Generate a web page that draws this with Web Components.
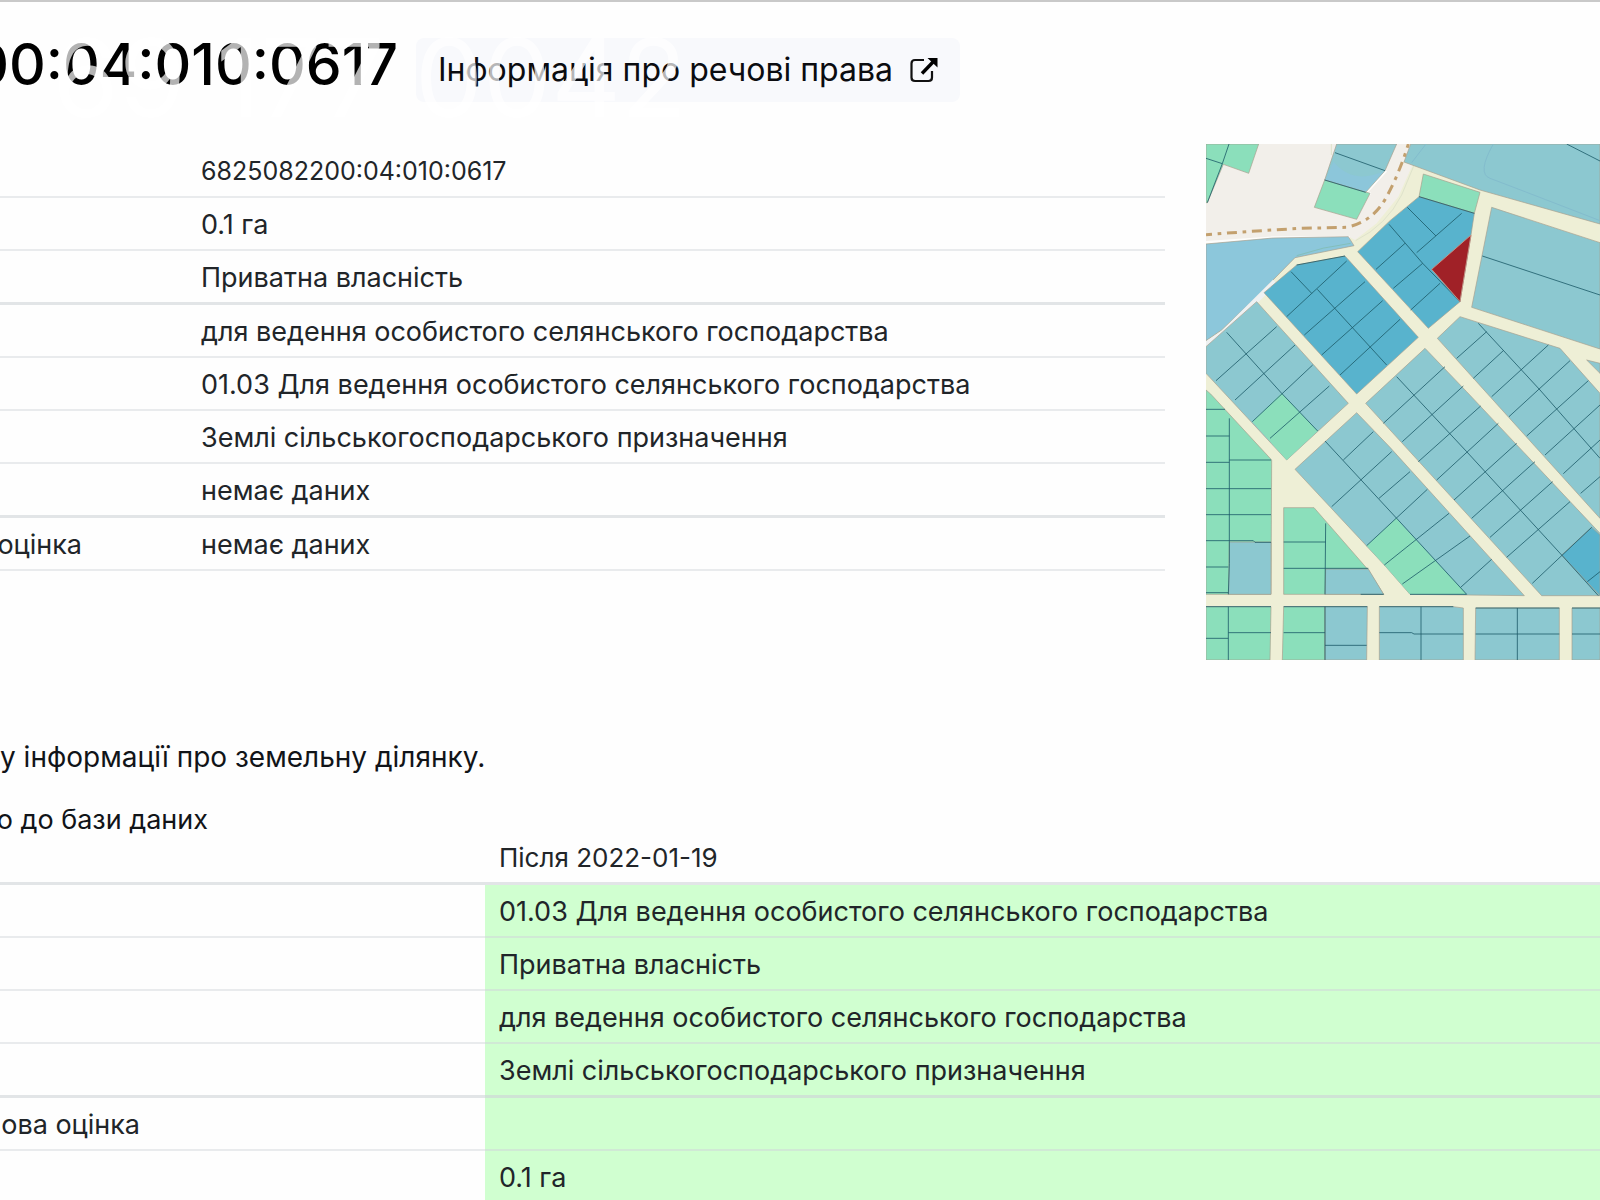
<!DOCTYPE html>
<html lang="uk">
<head>
<meta charset="utf-8">
<title>Земельна ділянка</title>
<style>
  body { margin: 0; background: #fefefe; overflow: hidden; font-family: Inter, "Noto Sans", sans-serif; color: #212529; }
</style>
</head>
<body>
<parcel-page></parcel-page>
<script>
function define(name, html, setup) {
  const t = document.createElement('template');
  t.innerHTML = html;
  customElements.define(name, class extends HTMLElement {
    connectedCallback() {
      if (this.shadowRoot) return;
      this.attachShadow({ mode: 'open' }).append(t.content.cloneNode(true));
      if (setup) setup(this);
    }
  });
}

define('clip-end', `
<style>
  :host { display: flex; justify-content: flex-end; overflow: hidden; white-space: nowrap; }
</style>
<span><slot></slot></span>`);

define('rights-link', `
<style>
  :host { display: block; }
  a { display: flex; align-items: center; gap: 17px; box-sizing: border-box; height: 64px; padding: 0 22px;
      background: #f8f9fc; border-radius: 8px; color: #0b0c10; text-decoration: none; font-size: 32px; line-height: 40px; white-space: nowrap; }
  svg { display: block; width: 28px; height: 26px; }
</style>
<a href="#rights"><slot></slot>
<svg viewBox="0 0 28 26" aria-hidden="true">
  <path d="M14 3H5Q1.5 3 1.5 6.500V20.500Q1.500 24 5 24H18.500Q22 24 22 20.500V14" fill="none" stroke="#111" stroke-width="2.200"/>
  <path d="M12 16.500 23 5" fill="none" stroke="#000" stroke-width="3.400"/>
  <path d="M17.500 1H27.500V10.500Z" fill="#000"/>
</svg></a>`);

define('page-header', `
<style>
  :host { display: flex; align-items: flex-start; gap: 18px; padding-top: 36px; height: 106px; box-sizing: border-box; border-top: 2px solid #c9c9c9; position: relative; }
  h1 { margin: 0; width: 398px; font-size: 57px; line-height: 54px; font-weight: 500; color: #000; }
  .stamp { position: absolute; left: 52px; top: 16px; font-size: 108px; line-height: 120px; color: rgba(255,255,255,.7); white-space: nowrap; pointer-events: none; }
</style>
<h1><clip-end>00:04:010:0617</clip-end></h1>
<rights-link>Інформація про речові права</rights-link>
<div class="stamp" aria-hidden="true">69 177 0042</div>`);

define('parcel-facts', `
<style>
  :host { display: block; padding-top: 1px; }
  table { width: 100%; border-collapse: separate; border-spacing: 0; table-layout: fixed; font-size: 27px; line-height: 31px; }
  th, td { padding: 11px 0 9px; height: 31px; font-weight: 400; text-align: left; border-bottom: 2px solid #e9ebed; white-space: nowrap; }
  th { width: 201px; }
  clip-end { width: 82px; }
  .strong > * { border-bottom: 3px solid #e2e5e7; }
  .num { font-size: 25px; }
</style>
<table><tbody>
<tr><th></th><td class="num">6825082200:04:010:0617</td></tr>
<tr><th></th><td>0.1 га</td></tr>
<tr class="strong"><th></th><td>Приватна власність</td></tr>
<tr><th></th><td>для ведення особистого селянського господарства</td></tr>
<tr><th></th><td>01.03 Для ведення особистого селянського господарства</td></tr>
<tr><th></th><td>Землі сільськогосподарського призначення</td></tr>
<tr class="strong"><th></th><td>немає даних</td></tr>
<tr><th scope="row"><clip-end>оцінка</clip-end></th><td>немає даних</td></tr>
</tbody></table>`);

define('change-table', `
<style>
  :host { display: block; }
  table { width: 100%; border-collapse: separate; border-spacing: 0; table-layout: fixed; font-size: 27px; line-height: 31px; }
  th, td { padding: 11px 0 9px; height: 31px; font-weight: 400; text-align: left; border-bottom: 2px solid #e9ebed; white-space: nowrap; }
  th:first-child { width: 485px; }
  thead th + th, td { padding-left: 14px; }
  td { background: #d0ffd0; border-color: #d0e9d5; }
  .strong > * { border-bottom-width: 3px; border-bottom-color: #e2e5e7; }
  .strong > td { border-bottom-color: #cfe3d5; }
  clip-end { width: 140px; }
  .num { font-size: 26px; }
</style>
<table>
<thead><tr class="strong"><th></th><th class="num" scope="col">Після 2022-01-19</th></tr></thead>
<tbody>
<tr><th></th><td>01.03 Для ведення особистого селянського господарства</td></tr>
<tr><th></th><td>Приватна власність</td></tr>
<tr><th></th><td>для ведення особистого селянського господарства</td></tr>
<tr class="strong"><th></th><td>Землі сільськогосподарського призначення</td></tr>
<tr><th scope="row"><clip-end>ова оцінка</clip-end></th><td></td></tr>
<tr><th></th><td>0.1 га</td></tr>
</tbody></table>`);

define('parcel-map', `
<style>
  :host { display: block; overflow: hidden; }
  svg { display: block; width: 100%; aspect-ratio: 394 / 516; }
  .t, .d, .g, .b { stroke: #a79f8d; stroke-width: 2; }
  .t { fill: #8cc8d0; } .d { fill: #58b3cd; } .g { fill: #8bdfbb; } .b { fill: #8cc7db; }
  .l { fill: none; stroke: #1b5a68; stroke-width: 3; opacity: .8; }
</style>
<svg viewBox="48 42 1182 1548" role="img" aria-label="Кадастрова карта">
<path fill="#eeefd6" d="M48 42H1230V1590H48Z"/>
<path fill="#f2efea" d="M48 42H665L640 98 668 104 625 200 560 280 495 330 480 322H250L48 340Z"/>
<path fill="none" stroke="#dfe3cb" stroke-width="3" d="M497 332Q590 285 635 195L672 106M424 42V75"/>
<path fill="none" stroke="#fdfdfb" stroke-width="8" d="M48 337 250 323H480M588 122 529 187 542 192"/>
<path class="b" d="M48 342 250 324 475 320 492 347 315 383 200 500 95 600 48 632Z"/>
<path fill="none" stroke="#7fb9a9" stroke-width="2" d="M320 377Q400 350 482 340"/>
<path fill="none" stroke="#eef1f2" stroke-width="17" d="M48 644 100 609 205 505 255 455"/>
<path class="g" d="M48 42H206L176 130 100 103 52 218H48Z"/>
<path class="l" d="M117 42 97 101 52 218M48 85 97 101"/>
<path class="t" d="M440 42H620L585 122 527 187 404 150Z"/>
<path fill="#8cc6da" d="M430 95Q490 165 582 124L527 185 406 149Z"/>
<path class="g" d="M404 150 540 190 500 268 373 232Z"/>
<path class="l" d="M435 68 585 122M404 150 527 187"/>
<path fill="none" stroke="#c3a06e" stroke-width="9" stroke-dasharray="30 17 11 17" stroke-dashoffset="12" d="M48 314 100 310 200 303 330 295 470 292Q550 275 590 200T655 42"/>
<path class="t" d="M662 42 642 96 870 180 1230 282V42Z"/>
<path fill="none" stroke="#83bccd" stroke-width="3" d="M910 42Q860 130 900 145 980 175 1230 272M708 42 665 98"/>
<path class="l" d="M1130 42 1230 93"/>
<path class="g" d="M700 132 870 187 853 250 687 200Z"/>
<path class="d" d="M687 200 853 250 843 315 810 515 715 595 503 365 600 272Z"/>
<path class="l" d="M687 200 853 250M597 283 698 400 810 515M652 232 738 318M815 250 680 368M645 340 558 418M698 400 610 475M750 460 662 540"/>
<path fill="#a02127" stroke="#c09083" stroke-width="3" d="M843 315 725 418 810 515Z"/>
<path class="d" d="M222 488 320 405 465 378 685 622 500 792Z"/>
<path class="l" d="M320 405 465 378M303 425 365 490M382 478 590 705M470 393 290 560M525 455 343 615M578 512 395 675M630 568 450 735"/>
<path class="t" d="M200 515 475 820 290 990 48 730V650Z"/>
<path fill="#8bdfbb" d="M187 875 275 790 383 903 290 990Z"/>
<path class="l" d="M110 607 275 790 383 903M260 590 78 752M315 645 135 810M368 705 187 875M418 768 240 925"/>
<path class="g" d="M48 780 62 792 245 990 243 1393H48Z"/>
<path class="t" d="M118 1236H243V1393H116Z"/>
<path class="l" d="M118 865V1300L115 1393M48 838H105M48 918H118M48 997H118M48 1076H243M48 1154H243M48 1232H190L195 1237H243M48 1311H115M48 1388H115M118 990H243"/>
<path class="g" d="M281 1133H372L535 1320 581 1393H281Z"/>
<path class="t" d="M407 1317H535L581 1393H405Z"/>
<path class="l" d="M407 1180 405 1393M281 1236H407M281 1315H535M512 1393H581"/>
<path class="t" d="M315 1018 500 848 600 952 1003 1397 660 1393 583 1305Z"/>
<path fill="#8bdfbb" d="M618 1165 830 1393H660L583 1305 530 1247Z"/>
<path class="l" d="M405 933 620 1165 830 1393H660M550 905 460 990M605 965 425 1130M660 1025 567 1105M712 1078 530 1247M777 1150 583 1305M840 1218 637 1362M905 1288 812 1372"/>
<path class="t" d="M705 655 830 785 1230 1210V1397H1055L527 820Z"/>
<path class="d" d="M1205 1192 1230 1215V1397L1115 1275Z"/>
<path class="l" d="M620 740 830 965 1115 1275 1225 1397M765 710 580 880M820 768 637 935M872 828 685 995M925 880 740 1050M980 940 792 1110M1035 995 845 1165M1088 1055 900 1222M1140 1115 950 1282M1205 1192 1027 1360M1230 1325 1192 1355"/>
<path class="t" d="M810 560 1110 655 1230 790V1165L742 625Z"/>
<path class="l" d="M865 580 1050 780 1230 985M890 605 800 685M940 662 850 745M1075 645 905 800M1140 692 957 860M1195 752 1010 918M1230 825 1065 975M1230 930 1120 1031M1230 1040 1172 1090"/>
<path class="t" d="M905 232 1230 338V657L845 532Z"/>
<path class="l" d="M877 378 1230 495"/>
<path class="t" d="M1190 690 1230 700V730Z"/>
<path class="g" d="M48 1430H243L240 1590H48ZM281 1430H405V1590H277Z"/>
<path class="t" d="M405 1430H532L530 1590H405ZM568 1430H790L820 1434V1590H568ZM857 1434H1108V1590H855ZM1146 1434H1230V1590H1146Z"/>
<path class="l" d="M115 1430V1590M48 1525H115M115 1508H243M48 1430H243M281 1430H532M281 1508H405M405 1430V1590M405 1546H530M568 1430H790M693 1430V1590M568 1508H665L672 1512H820M857 1434H1108M982 1434V1590M857 1512H1108M1146 1434H1230M1146 1512H1230"/>
</svg>`);

define('parcel-page', `
<style>
  :host { display: block; overflow: hidden; }
  .top { display: grid; grid-template-columns: minmax(0, 1165fr) minmax(0, 394fr); column-gap: 41px; padding-top: 38px; align-items: start; }
  p { margin: 0; font-size: 27px; line-height: 36px; color: #111418; white-space: nowrap; }
  .lead { font-size: 28px; }
  .notes { display: grid; row-gap: 27px; padding-top: 79px; }
  .notes clip-end { width: 208px; }
  change-table { margin-top: -7px; }
</style>
<page-header></page-header>
<main>
  <div class="top"><parcel-facts></parcel-facts><parcel-map></parcel-map></div>
  <div class="notes">
    <p class="lead">у інформації про земельну ділянку.</p>
    <p><clip-end>о до бази даних</clip-end></p>
  </div>
  <change-table></change-table>
</main>`);
</script>
</body>
</html>
